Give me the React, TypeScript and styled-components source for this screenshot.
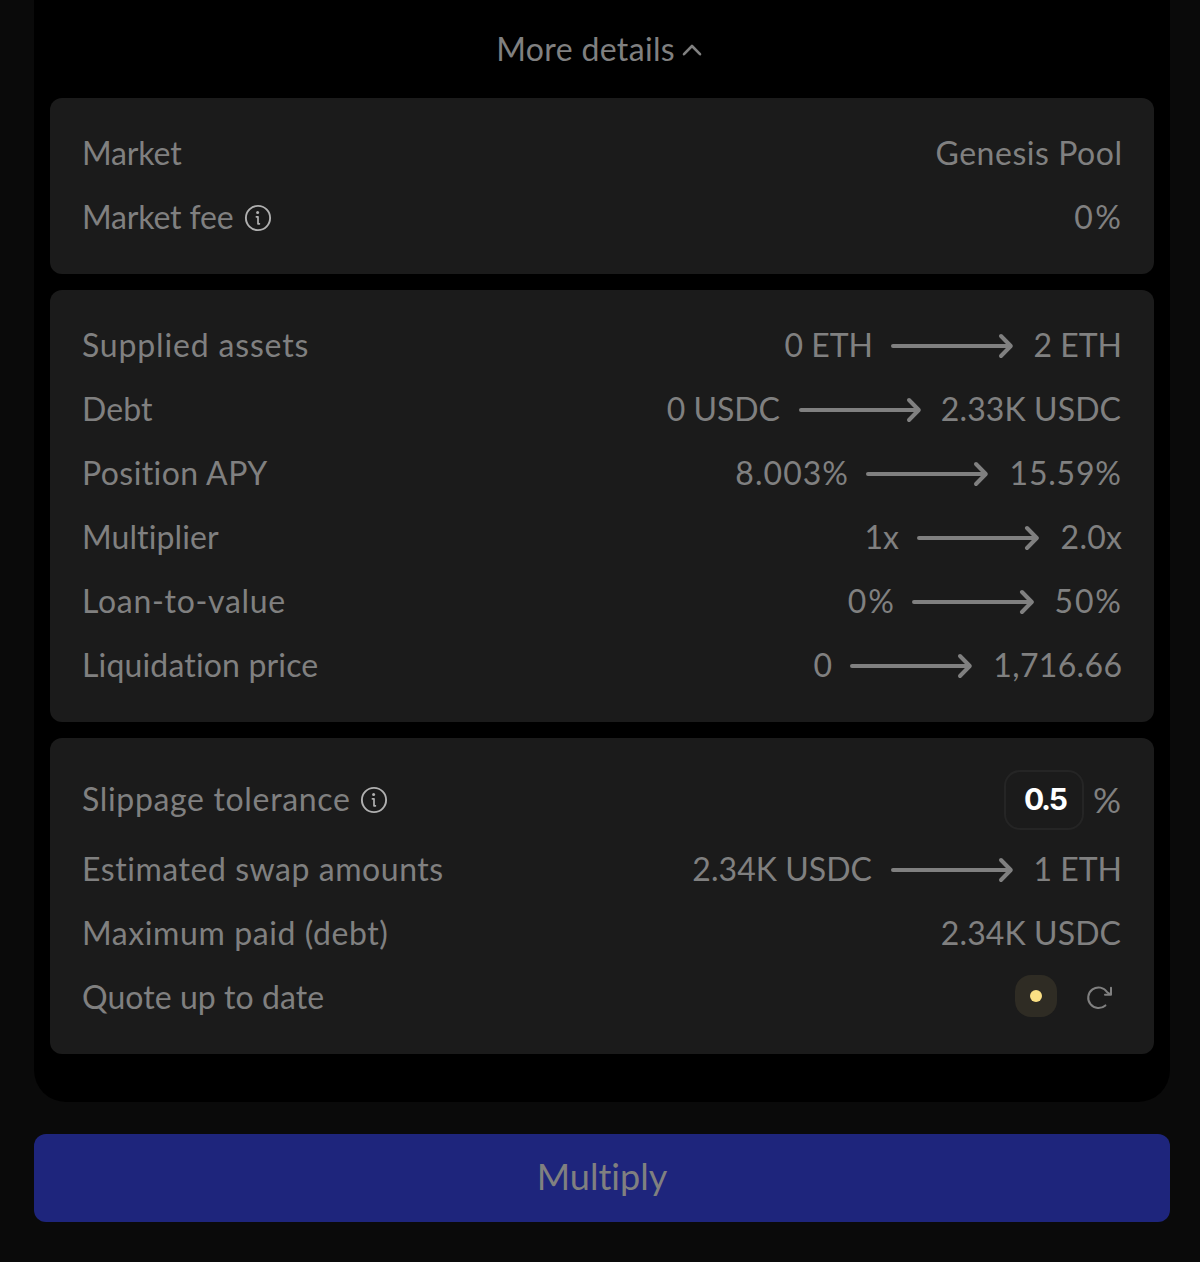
import React from "react";
import styled, { createGlobalStyle } from "styled-components";

const GlobalStyle = createGlobalStyle`
  * { box-sizing: border-box; }
  body {
    margin: 0;
    background: #0a0a0a;
    color: #808080;
    font-family: Lato, "Open Sans", sans-serif;
    font-variant-ligatures: none;
  }
`;

const Page = styled.main`
  width: 1200px;
  height: 1262px;
  padding: 0 30px 0 34px;
  display: flex;
  flex-direction: column;
  gap: 32px;
  overflow: hidden;
`;

const Panel = styled.section`
  height: 1102px;
  padding: 0 16px;
  background: #000;
  border-radius: 0 0 32px 32px;
  display: flex;
  flex-direction: column;
  gap: 16px;
`;

const Text = styled.span<{ $ls?: number; $size?: number; $lift?: number }>`
  display: block;
  font-size: ${(p) => p.$size ?? 32}px;
  line-height: 40px;
  letter-spacing: ${(p) => p.$ls ?? 0}px;
  margin-right: ${(p) => -(p.$ls ?? 0)}px;
  padding-bottom: ${(p) => p.$lift ?? 3}px;
  white-space: nowrap;
`;

const DetailsToggle = styled.button`
  height: 82px;
  padding: 18px 5px 0 0;
  border: 0;
  background: none;
  color: inherit;
  font: inherit;
  font-variant-ligatures: none;
  display: flex;
  align-items: center;
  justify-content: center;
  gap: 6px;
`;

const Card = styled.div`
  padding: 24px 32px;
  background: #1b1b1b;
  border-radius: 12px;
`;

const RowBox = styled.div<{ $h: number }>`
  height: ${(p) => p.$h}px;
  display: flex;
  align-items: center;
  justify-content: space-between;
`;

const Side = styled.div<{ $gap?: number }>`
  display: flex;
  align-items: center;
  gap: ${(p) => p.$gap ?? 0}px;
`;

const EndValue = styled.div<{ $w?: number; $inset?: number }>`
  width: ${(p) => (p.$w ? `${p.$w}px` : "auto")};
  padding-right: ${(p) => p.$inset ?? 0}px;
  display: flex;
  justify-content: flex-end;
`;

const ArrowSvg = styled.svg`
  display: block;
  margin: 0 19px 0 17px;
`;

const SlippageInput = styled.input`
  width: 80px;
  height: 60px;
  padding: 0 0 2px 18px;
  border: 2px solid #252525;
  border-radius: 16px;
  background: transparent;
  color: #fff;
  font: 700 30px/56px Inter, sans-serif;
  letter-spacing: -2.2px;
  outline: none;
`;

const Status = styled.div`
  width: 42px;
  height: 42px;
  margin: 0 28px 4px 0;
  border-radius: 16px;
  background: #2f2c24;
  display: grid;
  place-items: center;
`;

const Dot = styled.i`
  width: 12px;
  height: 12px;
  border-radius: 50%;
  background: #fbe084;
`;

const RefreshButton = styled.button`
  width: 28px;
  height: 28px;
  margin-right: 9px;
  padding: 0;
  border: 0;
  background: none;
  color: #808080;
`;

const MultiplyButton = styled.button`
  height: 88px;
  flex: none;
  padding: 0;
  border: 0;
  border-radius: 12px;
  background: #1e257c;
  color: #808080;
  font: inherit;
  font-variant-ligatures: none;
  display: flex;
  align-items: center;
  justify-content: center;
`;

const Arrow = () => (
  <ArrowSvg width="124" height="28" viewBox="0 0 124 28" fill="none" stroke="currentColor" strokeWidth="4" strokeLinecap="round" strokeLinejoin="round">
    <path d="M3 14H120M111 4L120.8 14L111 24" />
  </ArrowSvg>
);

const Info = () => (
  <svg width="28" height="28" viewBox="0 0 28 28" fill="none" stroke="#b0b0b0" strokeLinecap="round" strokeLinejoin="round">
    <circle cx="14" cy="14" r="12.1" strokeWidth="1.9" />
    <circle cx="13.6" cy="8.6" r="1.5" fill="#b0b0b0" stroke="none" />
    <path d="M12.4 12.8H14V19.8H15.4" strokeWidth="1.7" />
  </svg>
);

const Refresh = () => (
  <svg width="28" height="28" viewBox="0 0 28 28" fill="none" stroke="currentColor" strokeWidth="2" strokeLinecap="round" strokeLinejoin="round">
    <path d="M20.4 21.4A10.3 10.3 0 1 1 22.2 8.2L25.4 10.4M26 3.8V10.8H20" />
  </svg>
);

type Value = { text: string; ls?: number };
type RowProps = {
  label: string;
  ls?: number;
  info?: boolean;
  h?: number;
  from?: Value;
  to?: Value;
  w?: number;
  children?: React.ReactNode;
};

const insetFor = (s: string) => (/[%C]$/.test(s) ? 1 : 0);

function Row({ label, ls = 0, info, h = 64, from, to, w, children }: RowProps) {
  return (
    <RowBox $h={h}>
      <Side $gap={10}>
        <Text $ls={ls}>{label}</Text>
        {info && <Info />}
      </Side>
      <Side>
        {from && (
          <>
            <EndValue $inset={from.text.endsWith("C") ? 1 : 0}>
              <Text $ls={from.ls}>{from.text}</Text>
            </EndValue>
            <Arrow />
          </>
        )}
        {to && (
          <EndValue $w={w} $inset={insetFor(to.text)}>
            <Text $ls={to.ls}>{to.text}</Text>
          </EndValue>
        )}
        {children}
      </Side>
    </RowBox>
  );
}

export default function App() {
  return (
    <>
      <GlobalStyle />
      <Page>
        <Panel>
          <DetailsToggle>
            <Text $ls={0.35}>More details</Text>
            <svg width="22" height="16" viewBox="0 0 22 16" fill="none" stroke="currentColor" strokeWidth="2.6" strokeLinecap="round" strokeLinejoin="round">
              <path d="M3 12.2L11 4L19 12.2" />
            </svg>
          </DetailsToggle>
          <Card>
            <Row label="Market" ls={-0.14} to={{ text: "Genesis Pool", ls: 0.54 }} />
            <Row label="Market fee" ls={-0.17} info to={{ text: "0%", ls: 2.5 }} />
          </Card>
          <Card>
            <Row label="Supplied assets" ls={0.83} from={{ text: "0 ETH", ls: 0 }} to={{ text: "2 ETH" }} w={89} />
            <Row label="Debt" ls={0.1} from={{ text: "0 USDC" }} to={{ text: "2.33K USDC", ls: 0.1 }} w={181} />
            <Row label="Position APY" ls={0.42} from={{ text: "8.003%", ls: 1.04 }} to={{ text: "15.59%", ls: 0.8 }} w={114} />
            <Row label="Multiplier" ls={0.1} from={{ text: "1x" }} to={{ text: "2.0x", ls: 0.27 }} w={63} />
            <Row label="Loan-to-value" ls={0.7} from={{ text: "0%", ls: 2 }} to={{ text: "50%", ls: 1.9 }} w={68} />
            <Row label="Liquidation price" ls={0.16} from={{ text: "0" }} to={{ text: "1,716.66", ls: 0.35 }} w={130} />
          </Card>
          <Card>
            <Row label="Slippage tolerance" ls={0.66} info h={76}>
              <Side $gap={9}>
                <SlippageInput defaultValue="0.5" aria-label="Slippage tolerance" />
                <EndValue $inset={1}>
                  <Text $size={35}>%</Text>
                </EndValue>
              </Side>
            </Row>
            <Row label="Estimated swap amounts" ls={0.55} from={{ text: "2.34K USDC", ls: 0.05 }} to={{ text: "1 ETH" }} w={89} />
            <Row label="Maximum paid (debt)" ls={0.59} to={{ text: "2.34K USDC", ls: 0.1 }} />
            <Row label="Quote up to date" ls={0.06}>
              <Status>
                <Dot />
              </Status>
              <RefreshButton aria-label="Refresh quote">
                <Refresh />
              </RefreshButton>
            </Row>
          </Card>
        </Panel>
        <MultiplyButton>
          <Text $size={36} $lift={5}>Multiply</Text>
        </MultiplyButton>
      </Page>
    </>
  );
}
